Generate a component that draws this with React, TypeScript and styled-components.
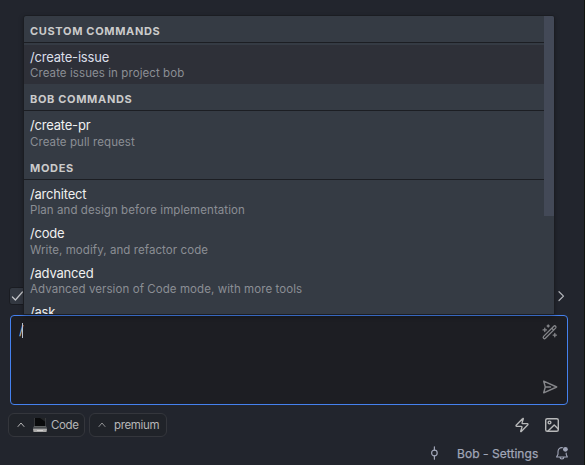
import React from 'react';
import styled, { createGlobalStyle, css } from 'styled-components';

const GlobalStyle = createGlobalStyle`
  * { box-sizing: border-box; }
  body {
    margin: 0;
    background: #23262e;
    font-family: Inter, 'Liberation Sans', sans-serif;
    -webkit-font-smoothing: antialiased;
  }
`;

const Panel = styled.main`
  position: relative;
  display: flex;
  flex-direction: column;
  width: 585px;
  height: 465px;
  overflow: hidden;
  background: #22252d;
  border-right: 1px solid #11140f;
`;

const Conversation = styled.div`
  flex: 1;
`;

const ApprovalRow = styled.div`
  display: flex;
  align-items: center;
  justify-content: space-between;
  height: 18px;
  margin: 0 17px 10px 9px;
  color: #b4b6bb;
`;

const Checkbox = styled.span`
  display: flex;
  align-items: center;
  justify-content: center;
  width: 18px;
  height: 18px;
  border: 1px solid #1a1c22;
  border-radius: 3px;
  background: #333841;
  color: #c4c5c9;
`;

const Composer = styled.div`
  display: flex;
  justify-content: space-between;
  width: 558px;
  height: 90px;
  margin-left: 10px;
  padding: 7px 9px 9px 8px;
  border: 1px solid #4581ee;
  border-radius: 4px;
  background: #1d1e23;
`;

const Draft = styled.div`
  display: flex;
  align-items: center;
  height: 15px;
  color: #b9bfcc;
  font-size: 13px;
  line-height: 15px;
`;

const Caret = styled.span`
  width: 1px;
  height: 15px;
  margin-left: -2px;
  background: #b6bfce;
`;

const ComposerActions = styled.div`
  display: flex;
  flex-direction: column;
  justify-content: space-between;
  padding-top: 1px;
  color: #85868a;
`;

const Toolbar = styled.div`
  display: flex;
  align-items: center;
  gap: 4px;
  height: 24px;
  margin: 8px 24px 0 8px;
`;

const SelectButton = styled.button<{ $width: number }>`
  display: flex;
  align-items: center;
  width: ${({ $width }) => $width}px;
  height: 24px;
  padding: 0 0 0 8px;
  border: 1px solid #34363c;
  border-radius: 6px;
  background: #202329;
  color: #b6b6b7;
  font: 11.5px/22px Inter, sans-serif;
  letter-spacing: -0.35px;
  white-space: nowrap;
`;

const ModeIcon = styled.span`
  margin: 0 4px 0 8px;
`;

const ModelLabel = styled.span`
  margin-left: 8px;
`;

const ToolIcons = styled.div`
  display: flex;
  gap: 14px;
  margin-left: auto;
  color: #b8b9ba;
`;

const StatusBar = styled.footer`
  display: flex;
  align-items: center;
  justify-content: flex-end;
  height: 22px;
  margin: 5px 15px 1px 0;
  color: #a0a5b7;
  font-size: 12px;
`;

const StatusLabel = styled.span`
  width: 82px;
  margin: 0 16px 0 17px;
  letter-spacing: 0.05px;
  -webkit-text-stroke: 0.25px currentColor;
  white-space: nowrap;
`;

const Menu = styled.section`
  position: absolute;
  top: 15px;
  left: 23px;
  display: flex;
  width: 532px;
  height: 300px;
  border: 1px solid #1b1d22;
  border-radius: 3px 3px 0 0;
  background: #353b44;
  box-shadow: 0 2px 5px rgba(0, 0, 0, 0.28);
  overflow: hidden;
`;

const MenuList = styled.div`
  flex: 1;
  height: 298px;
  overflow: hidden;
`;

const Scrollbar = styled.div`
  width: 10px;
`;

const ScrollThumb = styled.div`
  height: 200px;
  background: #434957;
`;

const GroupTitle = styled.h2`
  height: 27px;
  margin: 0 0 2px;
  padding: 8px 6px 0;
  border-bottom: 1px solid #1c1e23;
  color: #cbcbcb;
  font-size: 11px;
  font-weight: 700;
  line-height: 14px;
  letter-spacing: 0.66px;
`;

const Command = styled.div<{ $selected?: boolean }>`
  height: 39.4px;
  padding: 3px 6px 0;
  ${({ $selected }) => $selected && css`background: #2e3038;`}
`;

const CommandName = styled.div<{ $selected?: boolean }>`
  height: 17.4px;
  color: ${({ $selected }) => ($selected ? '#dcdfe9' : '#f0f0f0')};
  font-size: 13px;
  line-height: 18px;
  letter-spacing: -0.2px;
`;

const CommandDescription = styled.div`
  height: 16px;
  color: #8b8e94;
  font-size: 11.5px;
  line-height: 16px;
  letter-spacing: 0.08px;
  white-space: nowrap;
`;

const Icon = styled.svg`
  display: block;
  flex: none;
  overflow: visible;
  fill: none;
  stroke: currentColor;
  stroke-linecap: round;
  stroke-linejoin: round;
`;

const LaptopArt = styled.svg`
  display: block;
  flex: none;
`;

const groups = [
  { title: 'CUSTOM COMMANDS', commands: [{ name: '/create-issue', description: 'Create issues in project bob', selected: true }] },
  { title: 'BOB COMMANDS', commands: [{ name: '/create-pr', description: 'Create pull request' }] },
  {
    title: 'MODES',
    commands: [
      { name: '/architect', description: 'Plan and design before implementation' },
      { name: '/code', description: 'Write, modify, and refactor code' },
      { name: '/advanced', description: 'Advanced version of Code mode, with more tools' },
      { name: '/ask', description: '' },
    ],
  },
] as { title: string; commands: { name: string; description: string; selected?: boolean }[] }[];

const UpChevron = ({ dim = false }: { dim?: boolean }) => (
  <Icon width="8" height="6" viewBox="0 0 8 6" strokeWidth="1" opacity={dim ? 0.75 : 1}>
    <path d="m1 4.5 3-3.5 3 3.5" />
  </Icon>
);

const Laptop = () => (
  <LaptopArt width="14" height="14" viewBox="0 0 14 14">
    <path d="M1.5 0h11v8h-11z" fill="#090a0b" />
    <path d="m7 0 5.5 0v4z" fill="#222426" />
    <path d="M1.5 0v8M12.5 0v8" stroke="#45484b" strokeWidth=".7" />
    <path d="M1 8h12l1 3H0z" fill="#66696b" />
    <path d="M1 9.3h12" stroke="#303235" strokeWidth=".7" />
    <path d="M0 11h14l-.5 3H.5z" fill="#aaa9a8" />
    <path d="M4 12h6v1H4z" fill="#d2d0cf" />
  </LaptopArt>
);

const Wand = () => (
  <Icon width="16" height="16" viewBox="0 0 16 16" strokeWidth="1.3">
    <path d="M1.6 12.4 11.8 2.2q.9-.8 1.8 0t0 1.9L3.4 14.3q-.9.8-1.8 0t0-1.9zM9.8 4.2l1.9 1.9" />
    <path d="M2.8 4.2v3.4M1.1 5.9h3.4M12.8 9.4v3.4M11.1 11.1h3.4M6.2 1v2M5.2 2h2" />
  </Icon>
);

const Send = () => (
  <Icon width="16" height="16" viewBox="0 0 16 16" strokeWidth="1.4">
    <path d="m1.7 2.2 13 5.8-13 5.8L3.3 8zM3.3 8h5.2" />
  </Icon>
);

export default function App() {
  return (
    <>
      <GlobalStyle />
      <Panel>
        <Conversation />
        <ApprovalRow>
          <Checkbox>
            <Icon width="12" height="12" viewBox="0 0 12 12" strokeWidth="1.2"><path d="m.4 7 3 3 7-8" /></Icon>
          </Checkbox>
          <Icon width="12" height="12" viewBox="0 0 12 12" strokeWidth="1.2"><path d="m4 1.7 4.5 4.4L4 10.5" /></Icon>
        </ApprovalRow>
        <Composer>
          <Draft>/<Caret /></Draft>
          <ComposerActions><Wand /><Send /></ComposerActions>
        </Composer>
        <Toolbar>
          <SelectButton $width={77}>
            <UpChevron /><ModeIcon><Laptop /></ModeIcon>Code
          </SelectButton>
          <SelectButton $width={78}>
            <UpChevron dim /><ModelLabel>premium</ModelLabel>
          </SelectButton>
          <ToolIcons>
            <Icon width="16" height="16" viewBox="0 0 24 24" strokeWidth="2">
              <path d="M4 14a1 1 0 0 1-.78-1.63l9.9-10.2a.5.5 0 0 1 .86.46l-1.92 6.02A1 1 0 0 0 13 10h7a1 1 0 0 1 .78 1.63l-9.9 10.2a.5.5 0 0 1-.86-.46l1.92-6.02A1 1 0 0 0 11 14z" />
            </Icon>
            <Icon width="16" height="16" viewBox="0 0 16 16" strokeWidth="1.4">
              <rect x="1.7" y="1.7" width="12.6" height="12.6" rx="1.6" />
              <circle cx="5.5" cy="5.5" r="1.4" />
              <path d="m4 14 6.2-6.1 4.1 4" />
            </Icon>
          </ToolIcons>
        </Toolbar>
        <StatusBar>
          <Icon width="12" height="14" viewBox="0 0 12 14" strokeWidth="1.2"><circle cx="6.4" cy="7" r="2.8" /><path d="M6.4 .8v3.4M6.4 9.8v3.4" /></Icon>
          <StatusLabel>Bob - Settings</StatusLabel>
          <Icon width="14" height="14" viewBox="0 0 14 14" strokeWidth="1.1">
            <path d="M7.5 1.7C4.7 1.4 3 3.2 3 5.8v2.4L1.6 11h10.7l-1.1-2.7V7M5 11.3c0 2.2 3.9 2.2 3.9 0" />
            <circle cx="10.4" cy="3.3" r="2.4" fill="currentColor" stroke="none" />
          </Icon>
        </StatusBar>
        <Menu>
          <MenuList>
            {groups.map(({ title, commands }) => (
              <React.Fragment key={title}>
                <GroupTitle>{title}</GroupTitle>
                {commands.map(({ name, description, selected }) => (
                  <Command key={name} $selected={selected}>
                    <CommandName $selected={selected}>{name}</CommandName>
                    <CommandDescription>{description}</CommandDescription>
                  </Command>
                ))}
              </React.Fragment>
            ))}
          </MenuList>
          <Scrollbar><ScrollThumb /></Scrollbar>
        </Menu>
      </Panel>
    </>
  );
}
